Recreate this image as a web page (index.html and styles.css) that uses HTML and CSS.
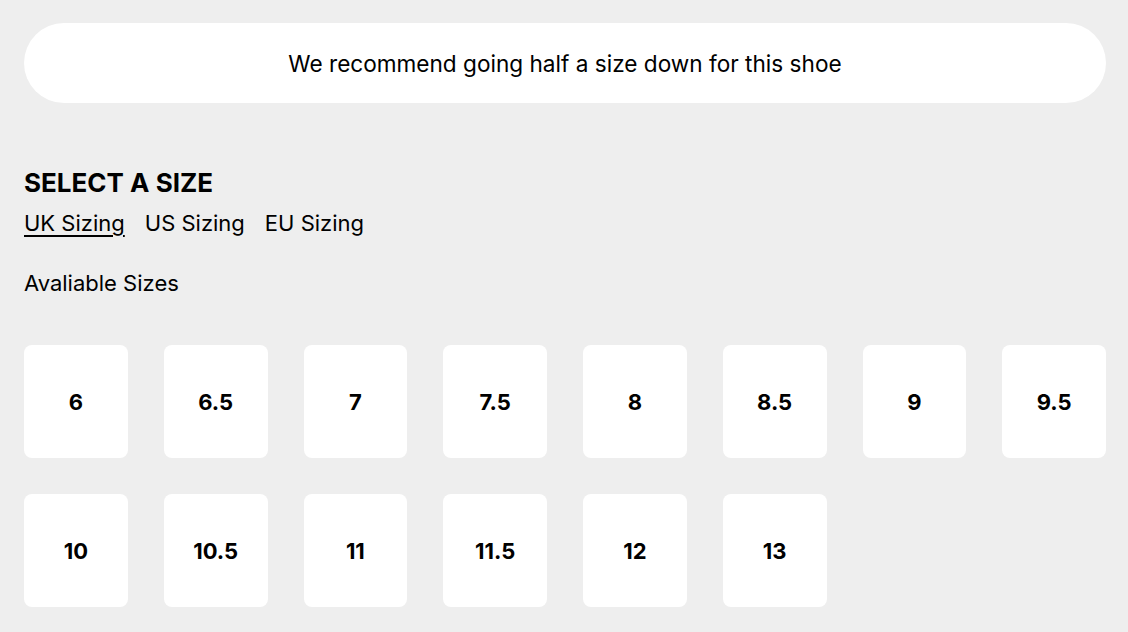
FILE: index.html
```html
<!DOCTYPE html>
<html>
<head>
<meta charset="utf-8">
<link rel="stylesheet" href="styles.css">
</head>
<body>
<div class="page">
  <div class="notice">We recommend going half a size down for this shoe</div>
  <h2 class="title">SELECT A SIZE</h2>
  <div class="tabs">
    <span class="tab active">UK Sizing</span>
    <span class="tab">US Sizing</span>
    <span class="tab">EU Sizing</span>
  </div>
  <div class="avail">Avaliable Sizes</div>
  <div class="grid">
    <div class="size">6</div>
    <div class="size">6.5</div>
    <div class="size">7</div>
    <div class="size">7.5</div>
    <div class="size">8</div>
    <div class="size">8.5</div>
    <div class="size">9</div>
    <div class="size">9.5</div>
    <div class="size">10</div>
    <div class="size">10.5</div>
    <div class="size">11</div>
    <div class="size">11.5</div>
    <div class="size">12</div>
    <div class="size">13</div>
  </div>
</div>
</body>
</html>
```
FILE: styles.css
```css
html, body {
  margin: 0;
  padding: 0;
  background: #eeeeee;
}
body {
  font-family: Inter, "Liberation Sans", sans-serif;
  color: #000;
}
.page {
  width: 1082px;
  padding: 23px 0 0 24px;
}
.notice {
  height: 80px;
  border-radius: 40px;
  background: #fff;
  display: flex;
  align-items: center;
  justify-content: center;
  font-size: 22.6px;
  font-weight: 400;
}
.title {
  margin: 64px 0 0 0;
  font-size: 26px;
  font-weight: 700;
  line-height: 32px;
}
.tabs {
  display: flex;
  gap: 20px;
  margin-top: 9px;
  font-size: 22px;
  line-height: 30px;
}
.tab.active {
  text-decoration: underline;
  text-underline-offset: 4px;
  text-decoration-thickness: 2px;
}
.avail {
  margin-top: 30px;
  font-size: 22px;
  line-height: 30px;
}
.grid {
  margin-top: 47px;
  display: grid;
  grid-template-columns: repeat(8, 1fr);
  column-gap: 36px;
  row-gap: 36px;
}
.size {
  height: 113px;
  background: #fff;
  border-radius: 8px;
  display: flex;
  align-items: center;
  justify-content: center;
  font-size: 22px;
  font-weight: 700;
}
```
